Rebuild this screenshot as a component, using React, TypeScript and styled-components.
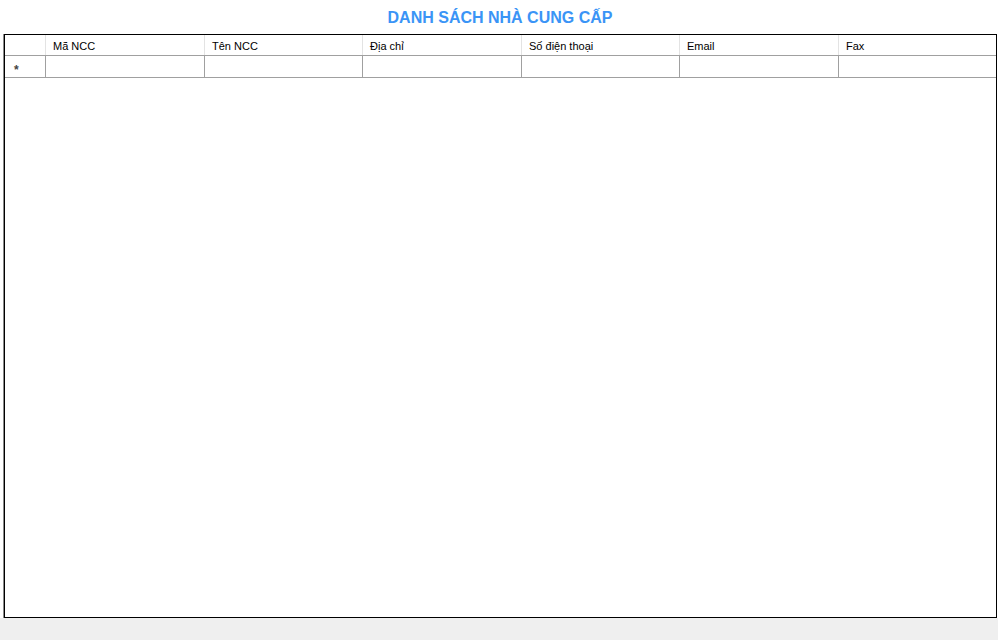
import React from "react";
import styled, { createGlobalStyle } from "styled-components";

const Global = createGlobalStyle`
  *, *::before, *::after { box-sizing: border-box; }
  html, body { margin: 0; padding: 0; background: #efefef; }
  body { font-family: "Liberation Sans", Arial, sans-serif; }
`;

const Page = styled.div`
  width: 998px;
  height: 640px;
  display: flex;
  flex-direction: column;
  background: #efefef;
`;

const Surface = styled.div`
  height: 618px;
  background: #ffffff;
  display: flex;
  flex-direction: column;
`;

const Title = styled.h1`
  margin: 0;
  height: 34px;
  display: flex;
  align-items: center;
  justify-content: center;
  padding-left: 2px;
  padding-top: 1px;
  font-family: "Liberation Sans", Arial, sans-serif;
  font-size: 16px;
  font-weight: bold;
  color: #3a94f6;
`;

const GridWrap = styled.div`
  flex: 1;
  display: flex;
  padding-left: 4px;
  padding-right: 1px;
`;

const Grid = styled.div`
  flex: 1;
  border: 1px solid #000;
  box-shadow: -1px 0 0 #8a8a8a;
  background: #fff;
`;

const Row = styled.div<{ $header?: boolean }>`
  display: grid;
  grid-template-columns: 41px 159px 158px 159px 158px 159px 1fr;
  height: ${(p) => (p.$header ? "21px" : "22px")};
  border-bottom: 1px solid #a0a0a0;
`;

const Cell = styled.div<{ $header?: boolean }>`
  border-right: 1px solid ${(p) => (p.$header ? "#e3e3e3" : "#a0a0a0")};
  font-size: 11px;
  font-family: "Liberation Sans", Tahoma, sans-serif;
  color: #000;
  display: flex;
  align-items: center;
  padding-left: 7px;
  padding-top: 1px;
  white-space: nowrap;
  overflow: hidden;
  &:last-child { border-right: none; }
`;

const RowHead = styled.div<{ $header?: boolean }>`
  border-right: 1px solid ${(p) => (p.$header ? "#e3e3e3" : "#a0a0a0")};
  display: flex;
  align-items: center;
  padding-left: 9px;
  padding-top: 6px;
  font-size: 12px;
  font-weight: bold;
  color: #444;
`;

const columns = ["Mã NCC", "Tên NCC", "Địa chỉ", "Số điện thoại", "Email", "Fax"];

export default function App() {
  return (
    <Page>
      <Global />
      <Surface>
        <Title>DANH SÁCH NHÀ CUNG CẤP</Title>
        <GridWrap>
          <Grid>
            <Row $header>
              <RowHead $header />
              {columns.map((c) => (
                <Cell $header key={c}>{c}</Cell>
              ))}
            </Row>
            <Row>
              <RowHead>*</RowHead>
              {columns.map((c) => (
                <Cell key={c} />
              ))}
            </Row>
          </Grid>
        </GridWrap>
      </Surface>
    </Page>
  );
}
